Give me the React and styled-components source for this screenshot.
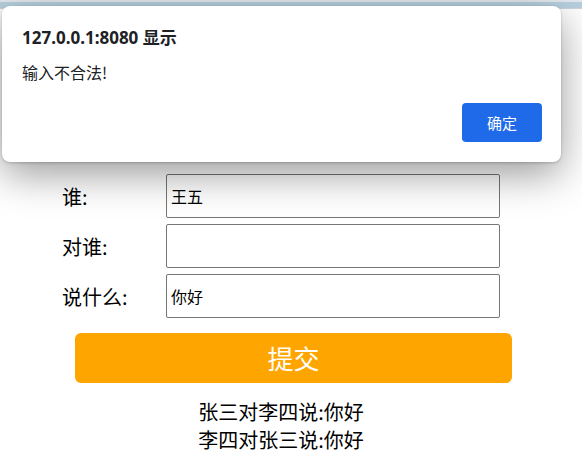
import React from "react";
import styled, { createGlobalStyle } from "styled-components";

const Global = createGlobalStyle`
  html, body { margin: 0; padding: 0; background: #fff; }
  body { font-family: "Noto Sans", "Noto Sans CJK SC", sans-serif; color: #000; }
  * { box-sizing: border-box; }
`;

const Page = styled.div`
  position: relative;
  width: 582px;
  height: 460px;
  overflow: hidden;
  background: #fff;
`;

const TopStrip = styled.div`
  height: 9px;
  background: linear-gradient(#e3e9ee 0 2px, #b8d0df 2px 8px, #c9d6df 8px);
`;

const Form = styled.form`
  width: 438px;
  margin: 165px 0 0 62px;
  display: flex;
  flex-direction: column;
`;

const Row = styled.div`
  display: flex;
  align-items: center;
  height: 44px;
  margin-bottom: 6px;
`;

const Label = styled.label`
  width: 104px;
  font-family: "Noto Sans CJK SC", sans-serif;
  font-size: 20px;
`;

const Input = styled.input`
  width: 334px;
  height: 44px;
  border: 1px solid #767676;
  border-radius: 2px;
  padding: 0 4px;
  font-family: "Noto Sans CJK SC", sans-serif;
  font-size: 16px;
  color: #000;
  background: #fff;
  outline: none;
`;

const Submit = styled.button`
  width: 437px;
  height: 50px;
  margin: 9px 0 0 13px;
  border: none;
  border-radius: 6px;
  background: #ffa500;
  color: #fff;
  font-family: "Noto Sans CJK SC", sans-serif;
  font-size: 26px;
  line-height: 1;
  cursor: pointer;
`;

const Messages = styled.div`
  margin-top: 15px;
  text-align: center;
  font-family: "Noto Sans CJK SC", sans-serif;
  font-size: 20px;
  line-height: 28px;
`;

const Dialog = styled.div`
  position: absolute;
  left: 2px;
  top: 6px;
  width: 559px;
  height: 156px;
  background: #fff;
  border-radius: 8px;
  box-shadow: 0 12px 40px rgba(0, 0, 0, 0.4), 0 1px 3px rgba(0, 0, 0, 0.2);
  padding: 20px;
  display: flex;
  flex-direction: column;
`;

const Title = styled.div`
  font-family: "Noto Sans", "Noto Sans CJK SC", sans-serif;
  font-weight: 700;
  font-size: 17px;
  line-height: 24px;
  color: #202124;
`;

const Message = styled.div`
  margin-top: 11px;
  font-family: "Noto Sans CJK SC", sans-serif;
  font-size: 16px;
  line-height: 22px;
  color: #202124;
`;

const Actions = styled.div`
  margin-top: auto;
  display: flex;
  justify-content: flex-end;
`;

const OkButton = styled.button`
  width: 80px;
  height: 39px;
  border: none;
  border-radius: 4px;
  background: #1f6ae8;
  color: #fff;
  font-family: "Noto Sans CJK SC", sans-serif;
  font-size: 15px;
  margin-right: -1px;
`;

const rows = [
  { label: "谁:", value: "王五" },
  { label: "对谁:", value: "" },
  { label: "说什么:", value: "你好" },
];

export default function App() {
  return (
    <Page>
      <Global />
      <TopStrip />
      <Form onSubmit={(e) => e.preventDefault()}>
        {rows.map((r) => (
          <Row key={r.label}>
            <Label>{r.label}</Label>
            <Input defaultValue={r.value} />
          </Row>
        ))}
        <Submit type="submit">提交</Submit>
        <Messages>
          <div>张三对李四说:你好</div>
          <div>李四对张三说:你好</div>
        </Messages>
      </Form>
      <Dialog>
        <Title>127.0.0.1:8080 显示</Title>
        <Message>输入不合法!</Message>
        <Actions>
          <OkButton>确定</OkButton>
        </Actions>
      </Dialog>
    </Page>
  );
}
